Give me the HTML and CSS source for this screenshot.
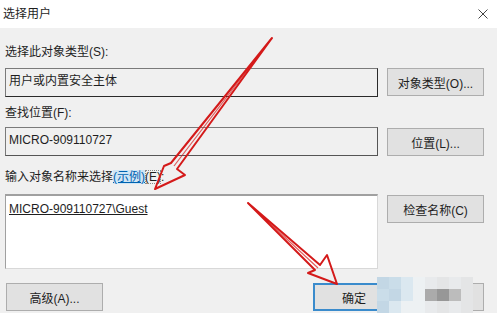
FILE: index.html
```html
<!DOCTYPE html>
<html lang="zh-CN">
<head>
  <meta charset="UTF-8">
  <title>选择用户</title>
  <link rel="stylesheet" href="styles.css">
</head>
<body>
  <main class="dialog">
    <header class="titlebar">
      <span class="title">选择用户</span>
      <svg class="close" width="10" height="10" viewBox="0 0 10 10">
        <path d="M0.5 0.5L9.5 9.5M9.5 0.5L0.5 9.5" stroke="#444" stroke-width="1"/>
      </svg>
    </header>

    <section class="content">
      <div class="label first">选择此对象类型(S):</div>
      <div class="row">
        <div class="field readonly strong">用户或内置安全主体</div>
        <button class="btn">对象类型(O)...</button>
      </div>

      <div class="label second">查找位置(F):</div>
      <div class="row row2">
        <div class="field readonly">MICRO-909110727</div>
        <button class="btn">位置(L)...</button>
      </div>

      <div class="label third">输入对象名称来选择<span class="link">(示例)</span><span class="key">(E)</span>:</div>
      <div class="row row3">
        <div class="field names"><u>MICRO-909110727\Guest</u></div>
        <button class="btn">检查名称(C)</button>
      </div>

      <div class="actions">
        <button class="btn">高级(A)...</button>
        <div class="confirm">
          <button class="btn small default">确定</button>
          <button class="btn small">取消</button>
        </div>
      </div>
    </section>

    <!-- blurred area over the cancel button -->
    <div class="mosaic">
      <i class="b1"></i><i class="b2"></i><i class="b3"></i><i class="w1"></i><i class="w2"></i><i class="w3"></i><i class="w2"></i><i class="w3"></i>
      <i class="b2"></i><i class="b1"></i><i class="b3"></i><i class="w1"></i><i class="g1"></i><i class="g2"></i><i class="g3"></i><i class="w3"></i>
      <i class="b1"></i><i class="b3"></i><i class="w1"></i><i class="w1"></i><i class="w2"></i><i class="w3"></i><i class="w2"></i><i class="w3"></i>
    </div>

    <!-- hand-drawn red arrows -->
    <svg class="arrows" width="497" height="313" viewBox="0 0 497 313">
      <polygon points="272,38 177,169 185,175 155,189 164,166 171,163" />
      <polyline points="272,38 174,166" />
      <polygon points="248,203 320,265 327,255 337,284 308,273 315,270" />
      <polyline points="248,203 318,268" />
    </svg>
  </main>
</body>
</html>
```

FILE: styles.css
```css
* {
  box-sizing: border-box;
}
body {
  margin: 0;
  font-family: "Liberation Sans", "Noto Sans CJK SC", sans-serif;
  font-size: 12px;
  color: #1e1e1e;
}
.dialog {
  position: relative;
  width: 497px;
  height: 313px;
  overflow: hidden;
  background: #f0f0f0;
}
.titlebar {
  height: 28px;
  background: #fff;
  display: flex;
  align-items: center;
  justify-content: space-between;
  padding: 0 9px 0 3px;
}
.title {
  line-height: 16px;
}
.content {
  padding: 16px 13px 0 5px;
}
.label {
  height: 16px;
  line-height: 16px;
}
.label.second {
  margin-top: 8px;
}
.label.third {
  margin-top: 13px;
}
.link {
  color: #0063b1;
  background: #cfe5f5;
  text-decoration: underline;
}
.key {
  outline: 1px dotted #888;
  outline-offset: -1px;
}
.row {
  display: flex;
  align-items: flex-start;
  gap: 9px;
  margin-top: 8px;
}
.row2 {
  margin-top: 6px;
}
.row3 {
  margin-top: 9px;
}
.row2 .btn,
.row3 .btn {
  margin-top: 1px;
}
.field {
  flex: 1;
  height: 29px;
  border: 1px solid #7a7a7a;
  border-right-color: #555;
  border-bottom-color: #555;
  padding: 4px 3px;
  line-height: 16px;
}
.field.strong {
  border-right-color: #2a2a2a;
  border-bottom-color: #2a2a2a;
}
.field.names {
  height: 75px;
  background: #fff;
  border: 1px solid #a0a0a0;
  border-top-width: 2px;
  border-bottom-color: #d8d8d8;
  border-right-color: #d8d8d8;
  padding: 5px 3px;
}
.btn {
  width: 97px;
  height: 28px;
  padding: 0;
  background: #e1e1e1;
  border: 1px solid #adadad;
  font: inherit;
  color: inherit;
}
.actions {
  display: flex;
  justify-content: space-between;
  margin-top: 14px;
  padding-left: 1px;
}
.confirm {
  display: flex;
  gap: 7px;
}
.btn.small {
  width: 82px;
}
.btn.default {
  border: 2px solid #3a8bcc;
}
.mosaic {
  position: absolute;
  left: 377px;
  top: 277px;
  display: grid;
  grid-template-columns: repeat(8, 12px);
  grid-auto-rows: 12px;
}
.mosaic i {
  display: block;
}
.mosaic .b1 { background: #c3d7e5; }
.mosaic .b2 { background: #cadde9; }
.mosaic .b3 { background: #dbe8f0; }
.mosaic .w1 { background: #edf1f3; }
.mosaic .w2 { background: #e8eaec; }
.mosaic .w3 { background: #e4e5e6; }
.mosaic .g1 { background: #ababab; }
.mosaic .g2 { background: #979797; }
.mosaic .g3 { background: #bcbcbc; }
.arrows {
  position: absolute;
  left: 0;
  top: 0;
  pointer-events: none;
}
.arrows polygon,
.arrows polyline {
  fill: none;
  stroke: #d41a1a;
  stroke-width: 2;
  stroke-linejoin: round;
}
.arrows polyline {
  stroke-width: 1.2;
  opacity: 0.7;
}
```
